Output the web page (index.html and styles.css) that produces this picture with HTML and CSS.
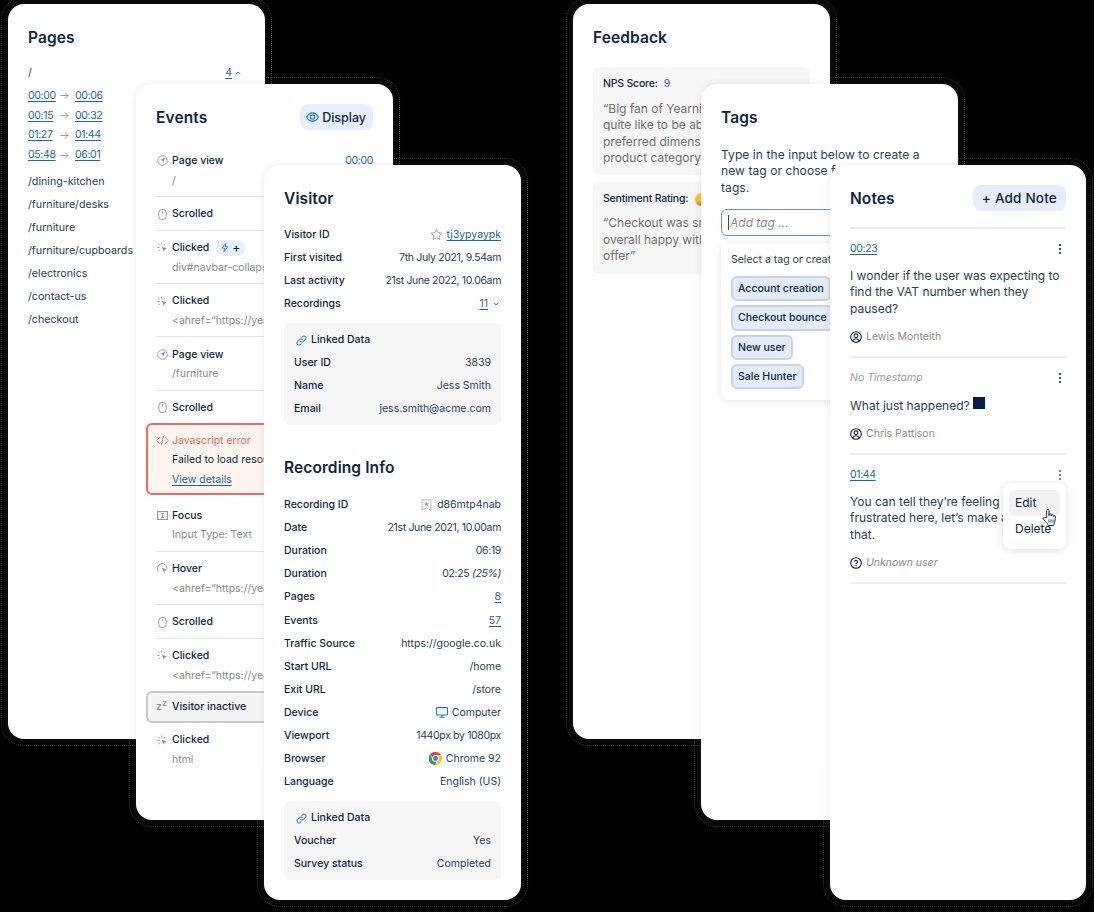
FILE: index.html
```html
<!DOCTYPE html>
<html>
<head>
  <title>Recording panels</title>
  <link rel="stylesheet" href="styles.css">
</head>
<body>
  <svg class="sprites" width="0" height="0">
    <symbol id="i-page" viewBox="0 0 12 12"><circle cx="6" cy="6" r="5.2" fill="none" stroke="currentColor"/><path d="M9 3 3.4 5.4l2.5.7.7 2.5z" fill="currentColor"/></symbol>
    <symbol id="i-mouse" viewBox="0 0 12 12"><rect x="2" y=".6" width="8" height="10.8" rx="3.4" fill="none" stroke="currentColor"/><path d="M6 2.6v2" stroke="currentColor"/></symbol>
    <symbol id="i-click" viewBox="0 0 12 12"><path d="M5 .5v2.2M1.4 2l1.6 1.5M.4 6h2.3M1.6 10l1.5-1.5M8.8 2 7.3 3.5" fill="none" stroke="currentColor"/><path d="m5.2 5.2 5.6 2-2.4.9-.9 2.5z" fill="currentColor"/></symbol>
    <symbol id="i-code" viewBox="0 0 14 12"><path d="M4 2.5.8 6 4 9.5M10 2.5 13.2 6 10 9.5M8.2 1 5.8 11" fill="none" stroke="currentColor" stroke-linecap="round"/></symbol>
    <symbol id="i-focus" viewBox="0 0 12 12"><rect x=".5" y="1.6" width="11" height="8.8" fill="#f0f0f0" stroke="currentColor"/><path d="M4.4 3.8h3.2M6 3.8v4.4M4.4 8.2h3.2" fill="none" stroke="currentColor" stroke-width=".8"/></symbol>
    <symbol id="i-hover" viewBox="0 0 12 12"><path d="M1.6 9A5.2 5.2 0 1 1 10.9 6.6" fill="none" stroke="currentColor"/><path d="m5.4 5.2 5.6 2.2-2.4.9-.9 2.6z" fill="currentColor"/></symbol>
    <symbol id="i-link" viewBox="0 0 12 12"><path d="M5 7a2.2 2.2 0 0 0 3.2 0l2.3-2.3A2.3 2.3 0 0 0 7.3 1.5l-1 1M7 5a2.2 2.2 0 0 0-3.2 0L1.500 7.300a2.300 2.300 0 0 0 3.200 3.200l1-1" fill="none" stroke="currentColor" stroke-width="1.1" stroke-linecap="round"/></symbol>
    <symbol id="i-user" viewBox="0 0 12 12"><circle cx="6" cy="6" r="5.3" fill="none" stroke="currentColor" stroke-width="1.1"/><circle cx="6" cy="4.8" r="1.9" fill="none" stroke="currentColor" stroke-width="1.1"/><path d="M2.6 10c.6-1.5 1.9-2.3 3.4-2.3s2.8.8 3.4 2.3" fill="none" stroke="currentColor" stroke-width="1.1"/></symbol>
    <symbol id="i-dots" viewBox="0 0 4 12"><circle cx="2" cy="2" r="1.1" fill="currentColor"/><circle cx="2" cy="6" r="1.1" fill="currentColor"/><circle cx="2" cy="10" r="1.1" fill="currentColor"/></symbol>
    <symbol id="i-arrow" viewBox="0 0 10 10"><path d="M.5 5h8.4M5.400 1.500 8.900 5 5.400 8.500" fill="none" stroke="currentColor" stroke-width="1.1"/></symbol>
  </svg>

  <div class="canvas">

    <!-- left group -->
    <section class="card card-pages">
      <h2 class="card-title">Pages</h2>
      <div class="page-top">
        <span>/</span>
        <span class="count"><a class="link">4</a>
          <svg class="chev" viewBox="0 0 8 5"><path d="M1 4 4 1.2 7 4" fill="none" stroke="currentColor" stroke-width="1.2"/></svg>
        </span>
      </div>
      <div class="spans">
        <div class="span-row"><a class="link num span-from">00:00</a><svg class="arrow"><use href="#i-arrow"/></svg><a class="link num">00:06</a></div>
        <div class="span-row"><a class="link num span-from">00:15</a><svg class="arrow"><use href="#i-arrow"/></svg><a class="link num">00:32</a></div>
        <div class="span-row"><a class="link num span-from">01:27</a><svg class="arrow"><use href="#i-arrow"/></svg><a class="link num">01:44</a></div>
        <div class="span-row"><a class="link num span-from">05:48</a><svg class="arrow"><use href="#i-arrow"/></svg><a class="link num">06:01</a></div>
      </div>
      <ul class="page-list">
        <li>/dining-kitchen</li>
        <li>/furniture/desks</li>
        <li>/furniture</li>
        <li>/furniture/cupboards</li>
        <li>/electronics</li>
        <li>/contact-us</li>
        <li>/checkout</li>
      </ul>
    </section>

    <section class="card card-events">
      <div class="card-head head-events">
        <h2 class="card-title">Events</h2>
        <button class="btn btn-display">
          <svg class="btn-eye" viewBox="0 0 14 12"><path d="M.8 6C2.2 3 4.4 1.500 7 1.500S11.800 3 13.200 6C11.800 9 9.600 10.500 7 10.500S2.200 9 .8 6z" fill="none" stroke="currentColor" stroke-width="1.2"/><circle cx="7" cy="6" r="2.3" fill="none" stroke="currentColor" stroke-width="1.2"/></svg>
          Display
        </button>
      </div>
      <div class="event line">
        <div class="event-main"><svg class="ev-icon"><use href="#i-page"/></svg><span>Page view</span><a class="time num">00:00</a></div>
        <div class="event-sub">/</div>
      </div>
      <div class="event line">
        <div class="event-main"><svg class="ev-icon"><use href="#i-mouse"/></svg><span>Scrolled</span></div>
      </div>
      <div class="event line">
        <div class="event-main"><svg class="ev-icon"><use href="#i-click"/></svg><span>Clicked</span>
          <span class="badge"><svg class="bolt" viewBox="0 0 10 12"><path d="M6 .8 1.5 6.800h3L3.800 11.200 8.500 5h-3z" fill="none" stroke="currentColor"/></svg>+</span>
        </div>
        <div class="event-sub">div#navbar-collapse-main.navbar</div>
      </div>
      <div class="event line">
        <div class="event-main"><svg class="ev-icon"><use href="#i-click"/></svg><span>Clicked</span></div>
        <div class="event-sub">&lt;ahref=“https://yearnit.com/furniture”&gt;</div>
      </div>
      <div class="event line">
        <div class="event-main"><svg class="ev-icon"><use href="#i-page"/></svg><span>Page view</span></div>
        <div class="event-sub">/furniture</div>
      </div>
      <div class="event">
        <div class="event-main"><svg class="ev-icon"><use href="#i-mouse"/></svg><span>Scrolled</span></div>
      </div>
      <div class="event-error">
        <div class="event-main error-title"><svg class="ev-icon code-icon"><use href="#i-code"/></svg><span>Javascript error</span></div>
        <div class="error-text">Failed to load resource</div>
        <a class="link error-link">View details</a>
      </div>
      <div class="event line">
        <div class="event-main"><svg class="ev-icon"><use href="#i-focus"/></svg><span>Focus</span></div>
        <div class="event-sub">Input Type: Text</div>
      </div>
      <div class="event line">
        <div class="event-main"><svg class="ev-icon"><use href="#i-hover"/></svg><span>Hover</span></div>
        <div class="event-sub">&lt;ahref=“https://yearnit.com/furniture”&gt;</div>
      </div>
      <div class="event line">
        <div class="event-main"><svg class="ev-icon"><use href="#i-mouse"/></svg><span>Scrolled</span></div>
      </div>
      <div class="event">
        <div class="event-main"><svg class="ev-icon"><use href="#i-click"/></svg><span>Clicked</span></div>
        <div class="event-sub">&lt;ahref=“https://yearnit.com/furniture”&gt;</div>
      </div>
      <div class="event-inactive">
        <span class="zz">z<sup>z</sup></span><span>Visitor inactive</span>
      </div>
      <div class="event">
        <div class="event-main"><svg class="ev-icon"><use href="#i-click"/></svg><span>Clicked</span></div>
        <div class="event-sub">html</div>
      </div>
    </section>

    <section class="card card-visitor">
      <h2 class="card-title">Visitor</h2>
      <div class="rows">
        <div class="row"><b>Visitor ID</b><span class="val">
          <svg class="star" viewBox="0 0 14 14"><path d="m7 1.2 1.8 3.800 4.100.5-3 2.900.8 4.100L7 10.500l-3.700 2 .8-4.100-3-2.900 4.100-.5z" fill="none" stroke="currentColor"/></svg>
          <a class="link">tj3ypyaypk</a></span></div>
        <div class="row"><b>First visited</b><span class="num">7th July 2021, 9.54am</span></div>
        <div class="row"><b>Last activity</b><span class="num">21st June 2022, 10.06am</span></div>
        <div class="row"><b>Recordings</b><span class="val"><a class="link">11</a>
          <svg class="chev chev-gap" viewBox="0 0 8 5"><path d="M1 1 4 3.800 7 1" fill="none" stroke="currentColor" stroke-width="1.2"/></svg></span></div>
      </div>
      <div class="linked">
        <div class="linked-title"><svg class="link-icon"><use href="#i-link"/></svg><b>Linked Data</b></div>
        <div class="row"><b>User ID</b><span>3839</span></div>
        <div class="row"><b>Name</b><span>Jess Smith</span></div>
        <div class="row"><b>Email</b><span>jess.smith@acme.com</span></div>
      </div>
      <h2 class="card-title title-second">Recording Info</h2>
      <div class="rows rows-info">
        <div class="row"><b>Recording ID</b><span class="val">
          <svg class="bookmark" viewBox="0 0 12 13"><path d="M1 .7h10v11.600L6 9.800l-5 2.500z" fill="#f0f0f0" stroke="#bdbdbd"/><path d="m6 3 .8 1.600 1.700.2-1.200 1.200.3 1.700L6 6.900l-1.600.8.300-1.700-1.200-1.200 1.700-.2z" fill="#9a9a9a"/></svg>
          d86mtp4nab</span></div>
        <div class="row"><b>Date</b><span class="num">21st June 2021, 10.00am</span></div>
        <div class="row"><b>Duration</b><span class="num">06:19</span></div>
        <div class="row"><b>Duration</b><span class="num">02:25 <i>(25%)</i></span></div>
        <div class="row"><b>Pages</b><a class="link">8</a></div>
        <div class="row row-gap"><b>Events</b><a class="link">57</a></div>
        <div class="row"><b>Traffic Source</b><span>https://google.co.uk</span></div>
        <div class="row"><b>Start URL</b><span>/home</span></div>
        <div class="row"><b>Exit URL</b><span>/store</span></div>
        <div class="row"><b>Device</b><span class="val">
          <svg class="monitor" viewBox="0 0 12 11"><rect x=".6" y=".6" width="10.8" height="7.4" rx=".6" fill="none" stroke="currentColor" stroke-width="1.1"/><path d="M6 8v2M3.500 10.300h5" fill="none" stroke="currentColor" stroke-width="1.1"/></svg>
          Computer</span></div>
        <div class="row"><b>Viewport</b><span class="num">1440px by 1080px</span></div>
        <div class="row"><b>Browser</b><span class="val">
          <svg class="chrome" viewBox="0 0 24 24">
            <path d="M12 0a12 12 0 0 1 10.400 6H12a6 6 0 0 0-5.700 4.100L2.400 3.800A12 12 0 0 1 12 0z" fill="#db4437"/>
            <path d="M22.400 6A12 12 0 0 1 12 24l5.200-9a6 6 0 0 0-.7-7.500z" fill="#fbc02d"/>
            <path d="M12 24A12 12 0 0 1 2.400 3.800L6.800 15a6 6 0 0 0 6.700 2.800z" fill="#2e9e4f"/>
            <circle cx="12" cy="12" r="6" fill="#fff"/><circle cx="12" cy="12" r="4.5" fill="#3f7fe0"/>
          </svg>
          Chrome 92</span></div>
        <div class="row"><b>Language</b><span>English (US)</span></div>
      </div>
      <div class="linked">
        <div class="linked-title"><svg class="link-icon"><use href="#i-link"/></svg><b>Linked Data</b></div>
        <div class="row"><b>Voucher</b><span>Yes</span></div>
        <div class="row"><b>Survey status</b><span>Completed</span></div>
      </div>
    </section>

    <!-- right group -->
    <section class="card card-feedback">
      <h2 class="card-title">Feedback</h2>
      <div class="quote quote-first">
        <div class="quote-head"><b>NPS Score:</b><span class="score">9</span></div>
        <p>“Big fan of Yearnit but I would<br>quite like to be able to select my<br>preferred dimensions for each<br>product category on the site”</p>
      </div>
      <div class="quote">
        <div class="quote-head"><b>Sentiment Rating:</b><span class="face"></span></div>
        <p>“Checkout was smooth and I am<br>overall happy with the special<br>offer”</p>
      </div>
    </section>

    <section class="card card-tags">
      <h2 class="card-title">Tags</h2>
      <p class="tags-help">Type in the input below to create a<br>new tag or choose from existing<br>tags.</p>
      <div class="tag-input"><span class="caret"></span>Add tag ...</div>
      <div class="tag-menu">
        <div class="tag-menu-title">Select a tag or create one</div>
        <div class="chips">
          <span class="chip">Account creation</span>
          <span class="chip">Checkout bounce</span>
          <span class="chip">New user</span>
          <span class="chip">Sale Hunter</span>
        </div>
      </div>
    </section>

    <section class="card card-notes">
      <div class="card-head head-notes">
        <h2 class="card-title">Notes</h2>
        <button class="btn btn-note"><span class="plus">+</span>Add Note</button>
      </div>
      <div class="note">
        <div class="note-top"><a class="link num">00:23</a><svg class="dots"><use href="#i-dots"/></svg></div>
        <p>I wonder if the user was expecting to<br>find the VAT number when they<br>paused?</p>
        <div class="note-author"><svg class="user-icon"><use href="#i-user"/></svg>Lewis Monteith</div>
      </div>
      <div class="note">
        <div class="note-top"><i class="no-time">No Timestamp</i><svg class="dots"><use href="#i-dots"/></svg></div>
        <p>What just happened? <span class="square"></span></p>
        <div class="note-author"><svg class="user-icon"><use href="#i-user"/></svg>Chris Pattison</div>
      </div>
      <div class="note">
        <div class="note-top"><a class="link num">01:44</a><svg class="dots dots-on"><use href="#i-dots"/></svg></div>
        <p>You can tell they’re feeling very<br>frustrated here, let’s make a note of<br>that.</p>
        <div class="note-author author-unknown">
          <svg class="user-icon" viewBox="0 0 12 12"><circle cx="6" cy="6" r="5.3" fill="none" stroke="currentColor" stroke-width="1.1"/><path d="M4.500 4.700a1.500 1.500 0 1 1 2.300 1.300c-.5.300-.8.600-.8 1.200" fill="none" stroke="currentColor" stroke-width="1.1"/><circle cx="6" cy="8.800" r=".7" fill="currentColor"/></svg>
          <i>Unknown user</i></div>
        <div class="note-menu">
          <div class="note-menu-item item-on">Edit</div>
          <div class="note-menu-item">Delete</div>
          <svg class="hand" viewBox="0 0 16 20"><path d="M5 10V2.600a1.200 1.200 0 0 1 2.400 0V8l.2-1.200a1.100 1.100 0 0 1 2.200.3V8.500l.2-.9a1.100 1.100 0 0 1 2.100.4v1.200l.2-.5a1 1 0 0 1 1.900.4c0 2.400-.1 4.700-.8 6.400-.5 1.300-.9 2.200-.9 3H6.500c-.3-1.600-1.500-2.800-3-4.500L1.300 11.600c-.7-.9.500-2.100 1.500-1.300z" fill="#fff" stroke="#0a2647"/><path d="M7.400 12v3.500M9.600 12v3.500M11.800 12v3.500" stroke="#0a2647" stroke-width=".9"/></svg>
        </div>
      </div>
    </section>

  </div>
</body>
</html>
```

FILE: styles.css
```css
body {
  margin: 0;
  background: #000;
  font-family: "Inter", "Noto Sans", sans-serif;
  font-size: 10.5px;
  line-height: 19.8px;
  color: #24405f;
}

.sprites {
  position: absolute;
}

.canvas {
  position: relative;
  width: 1094px;
  height: 912px;
  overflow: hidden;
  background: #000;
}

b {
  font-weight: 500;
  color: #0a2647;
}

p {
  margin: 0;
}

.link {
  color: #1a67ad;
  text-decoration: underline;
  text-underline-offset: 2px;
}

/* Inter digits run wider than the design's */
.num {
  letter-spacing: -0.35px;
}

/* cards sit on a free canvas, overlapping each other */
.card {
  position: absolute;
  box-sizing: border-box;
  width: 257px;
  padding: 21px 20px 0;
  background: #fff;
  border-radius: 16px;
  box-shadow: 0 0 8px rgba(0, 0, 0, 0.09), 0 0 7px 3px rgba(255, 255, 255, 0.07);
  outline: 1px dotted rgba(255, 255, 255, 0.22);
  outline-offset: 6px;
}

.card-pages { left: 8px; top: 4px; height: 735px; }
.card-events { left: 136px; top: 84px; height: 736px; }
.card-visitor { left: 264px; top: 165px; height: 735px; }
.card-feedback { left: 573px; top: 4px; height: 735px; }
.card-tags { left: 701px; top: 84px; height: 736px; }
.card-notes { left: 830px; top: 165px; width: 256px; height: 735px; }

.card-title {
  margin: 0 0 -1px;
  padding-top: 1px;
  font-size: 15.5px;
  line-height: 24px;
  font-weight: 600;
  letter-spacing: 0.1px;
  color: #0a2647;
}

.card-head {
  display: flex;
  justify-content: space-between;
  align-items: center;
  height: 24px;
}

.btn {
  display: flex;
  align-items: center;
  height: 26px;
  border: 0;
  border-radius: 8px;
  background: #e6eefa;
  color: #0a2647;
  font-family: "Inter", sans-serif;
  font-weight: 500;
}

.btn-display {
  padding: 0 7px 0 6px;
  font-size: 12.5px;
}

.btn-note {
  padding: 0 9px;
  font-size: 13.5px;
  letter-spacing: 0.2px;
}

.plus {
  margin-right: 4px;
}

.btn-eye {
  width: 13px;
  height: 12px;
  margin-right: 3px;
  color: #1f74c9;
}

/* pages */
.page-top {
  display: flex;
  justify-content: space-between;
  margin-top: 14px;
  padding-right: 4px;
}

.count {
  display: flex;
  align-items: center;
}

.chev {
  width: 6px;
  height: 4px;
  margin-left: 3px;
  color: #1a67ad;
}

.chev-gap {
  margin-left: 5px;
  margin-right: 2px;
}

.spans {
  margin-top: 3px;
}

.span-row {
  display: flex;
  align-items: center;
}

.span-from {
  width: 32px;
}

.arrow {
  width: 9px;
  height: 9px;
  margin-right: 6px;
  color: #9a9a9a;
}

.page-list {
  list-style: none;
  margin: 7px 0 0;
  padding: 0;
  white-space: nowrap;
  font-size: 10.7px;
}

.page-list li {
  margin-bottom: 3.2px;
}

/* events */
.head-events {
  margin-bottom: 14.6px;
}

.event {
  padding: 7.4px 0 5.4px;
}

.line {
  border-bottom: 1px solid #e6e6e6;
}

.event-main {
  display: flex;
  align-items: center;
  font-weight: 500;
  color: #0a2647;
}

.event-sub {
  padding-left: 16px;
  color: #8a8a8a;
  white-space: nowrap;
  overflow: hidden;
}

.ev-icon {
  flex: none;
  width: 11px;
  height: 11px;
  margin: 0 4px 0 1px;
  color: #8f8f8f;
}

.time {
  margin-left: auto;
  color: #1a67ad;
  font-weight: 400;
}

.badge {
  display: flex;
  align-items: center;
  height: 16px;
  margin-left: 7px;
  padding: 0 5px;
  border-radius: 8px;
  background: #e6eefa;
  font-size: 12px;
}

.bolt {
  width: 8px;
  height: 11px;
  margin-right: 3px;
  color: #1f74c9;
}

.event-error {
  box-sizing: border-box;
  height: 72px;
  margin: 0 -10px 3px;
  padding: 5.4px 8px;
  border: 2px solid #f4685e;
  border-radius: 6px;
  background: #fff5ee;
}

.error-title {
  color: #f4685e;
  font-weight: 400;
}

.code-icon {
  width: 13px;
  margin: 0 3px 0 0;
  color: #f4685e;
}

.error-text {
  padding-left: 16px;
  color: #0a2647;
  white-space: nowrap;
}

.error-link {
  display: block;
  padding-left: 16px;
}

.event-inactive {
  box-sizing: border-box;
  display: flex;
  align-items: center;
  height: 32px;
  margin: 0 -10px;
  padding: 0 8px;
  border: 2px solid #c9c9c9;
  border-radius: 6px;
  background: #f5f5f5;
  font-weight: 500;
  color: #0a2647;
}

.zz {
  width: 16px;
  color: #8f8f8f;
  font-weight: 500;
}

.zz sup {
  font-size: 9px;
  line-height: 0;
}

/* visitor */
.rows {
  margin-top: 12.5px;
}

.rows-info {
  margin-top: 13.5px;
}

.row {
  box-sizing: border-box;
  display: flex;
  justify-content: space-between;
  align-items: center;
  height: 23px;
  padding-top: 2px;
  white-space: nowrap;
}

.row-gap {
  margin-top: 1px;
}

.val {
  display: flex;
  align-items: center;
}

.star {
  width: 13px;
  height: 13px;
  margin-right: 4px;
  color: #a3a3a3;
}

.bookmark {
  width: 11px;
  height: 12px;
  margin-right: 5px;
}

.monitor {
  width: 12px;
  height: 11px;
  margin-right: 4px;
  color: #1f74c9;
}

.chrome {
  width: 13px;
  height: 13px;
  margin-right: 4px;
}

.linked {
  margin-top: 8.5px;
  padding: 4.5px 10px 5.5px;
  border-radius: 6px;
  background: #f6f6f6;
}

.linked-title {
  box-sizing: border-box;
  display: flex;
  align-items: center;
  height: 23px;
  padding-top: 2px;
}

.link-icon {
  width: 11px;
  height: 11px;
  margin: 0 4px 0 2px;
  color: #1f82e8;
}

.title-second {
  margin-top: 30px;
}

/* feedback */
.quote {
  margin-top: 7px;
  padding: 7px 10px 9px;
  border-radius: 6px;
  background: #f6f6f6;
  white-space: nowrap;
}

.quote-first {
  margin-top: 18px;
}

.quote-head {
  display: flex;
  align-items: center;
  margin-bottom: 7px;
  letter-spacing: -0.2px;
}

.quote p {
  font-size: 12px;
  line-height: 16.4px;
  color: #6f6f6f;
}

.quote + .quote p {
  margin: -1px 0 1px;
}

.score {
  margin-left: 6px;
  color: #7c5cf0;
  font-weight: 500;
}

.face {
  width: 13px;
  height: 13px;
  margin-left: 7px;
  border-radius: 50%;
  background: linear-gradient(#fbbf24 55%, #ef5a3a);
}

/* tags */
.tags-help {
  margin-top: 17.8px;
  font-size: 12px;
  line-height: 16.4px;
  letter-spacing: 0.08px;
  white-space: nowrap;
}

.tag-input {
  box-sizing: border-box;
  display: flex;
  align-items: center;
  height: 27px;
  margin-top: 13px;
  padding: 0 6px;
  border: 1.5px solid #5b94d0;
  border-radius: 6px;
  font-size: 12px;
  font-style: italic;
  color: #8a8a8a;
}

.caret {
  width: 1px;
  height: 15px;
  margin-right: 1px;
  background: #4a4a4a;
}

.tag-menu {
  height: 157px;
  box-sizing: border-box;
  margin-top: 7px;
  padding: 7px 10px;
  border-radius: 6px;
  background: #fff;
  box-shadow: 0 1px 8px rgba(0, 0, 0, 0.1);
  white-space: nowrap;
}

.chips {
  display: flex;
  flex-direction: column;
  align-items: flex-start;
  gap: 4px;
  margin-top: 6px;
}

.chip {
  box-sizing: border-box;
  height: 25.4px;
  padding: 0 5px;
  border: 2px solid #c5d4ea;
  border-radius: 6px;
  background: #e3ecf9;
  color: #0a2647;
  font-weight: 500;
  line-height: 21px;
}

/* notes */
.head-notes {
  margin-bottom: 17px;
}

.note {
  position: relative;
  padding: 10px 0 9.2px;
  border-top: 2px solid #eee;
}

.note:last-child {
  border-bottom: 2px solid #eee;
}

.note-top {
  display: flex;
  justify-content: space-between;
  align-items: center;
}

.note p {
  margin-top: 9px;
  font-size: 12px;
  line-height: 16.4px;
  white-space: nowrap;
}

.dots {
  width: 4px;
  height: 12px;
  margin-right: 4px;
  color: #0a2647;
}

.dots-on {
  color: #1f74c9;
}

.no-time {
  color: #9a9a9a;
}

.note-author {
  display: flex;
  align-items: center;
  margin-top: 10px;
  color: #8a8a8a;
}

.author-unknown {
  color: #0a2647;
}

.author-unknown i {
  color: #8a8a8a;
}

.user-icon {
  width: 12px;
  height: 12px;
  margin-right: 4px;
  color: #0a2647;
}

.square {
  display: inline-block;
  width: 12px;
  height: 12px;
  vertical-align: 1px;
  background: #00204a;
}

/* menu over the last note */
.note-menu {
  position: absolute;
  right: 0;
  top: 28px;
  width: 63px;
  height: 66px;
  box-sizing: border-box;
  padding: 7px 6px;
  border-radius: 8px;
  background: #fff;
  box-shadow: 0 1px 8px rgba(0, 0, 0, 0.13);
  font-size: 12px;
  color: #0a2647;
}

.note-menu-item {
  height: 26px;
  padding-left: 6px;
  line-height: 26px;
}

.item-on {
  border-radius: 6px;
  background: #f2f2f2;
}

.hand {
  position: absolute;
  left: 39px;
  top: 25px;
  width: 15px;
  height: 19px;
}
```
